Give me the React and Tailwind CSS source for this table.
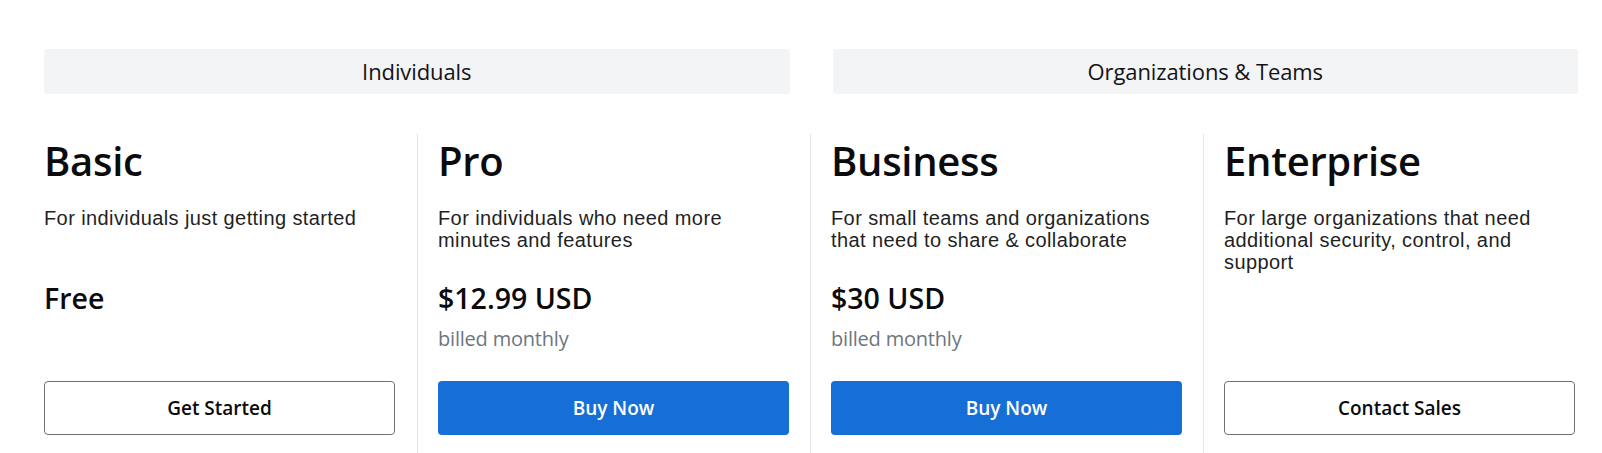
import React from "react";

const plans = [
  {
    name: "Basic",
    desc: ["For individuals just getting started"],
    price: "Free",
    billed: null,
    cta: "Get Started",
    primary: false,
  },
  {
    name: "Pro",
    desc: ["For individuals who need more", "minutes and features"],
    price: "$12.99 USD",
    billed: "billed monthly",
    cta: "Buy Now",
    primary: true,
  },
  {
    name: "Business",
    desc: ["For small teams and organizations", "that need to share & collaborate"],
    price: "$30 USD",
    billed: "billed monthly",
    cta: "Buy Now",
    primary: true,
  },
  {
    name: "Enterprise",
    desc: ["For large organizations that need", "additional security, control, and", "support"],
    price: null,
    billed: null,
    cta: "Contact Sales",
    primary: false,
  },
];

function Column({ plan, first }) {
  return (
    <div
      className={
        first
          ? "w-[373px] pr-[22px] pb-[30px]"
          : "w-[393px] border-l border-[#e6e7e9] pl-[20px] pr-[21px] pb-[30px]"
      }
    >
      <h2 className="text-[40px] leading-[48px] font-semibold text-[#0b0b0e] mt-[3px] tracking-[-0.3px]">
        {plan.name}
      </h2>
      <div
        className="mt-[22px] h-[70px] text-[20px] leading-[22px] text-[#1f1f24] tracking-[0.4px]"
        style={{ fontFamily: "'Liberation Sans', Arial, sans-serif" }}
      >
        {plan.desc.map((l) => (
          <div key={l}>{l}</div>
        ))}
      </div>
      <div className="h-[104px] pt-[4px]">
        {plan.price && (
          <div className="text-[28.5px] leading-[34px] font-semibold text-[#0b0b0e]">{plan.price}</div>
        )}
        {plan.billed && (
          <div className="mt-[13px] text-[20px] leading-[22px] text-[#6e7680] tracking-[-0.2px]">{plan.billed}</div>
        )}
      </div>
      <button
        className={
          plan.primary
            ? "w-[351px] h-[54px] rounded-[4px] bg-[#166ed7] text-white text-[19px] font-semibold flex items-center justify-center"
            : "w-[351px] h-[54px] rounded-[4px] border border-[#6e7278] bg-white text-[#0b0b0e] text-[19px] font-semibold flex items-center justify-center"
        }
      >
        {plan.cta}
      </button>
    </div>
  );
}

export default function App() {
  return (
    <div
      className="bg-white w-full h-[453px] overflow-hidden pt-[49px] pl-[44px]"
      style={{ fontFamily: "'Open Sans', 'Noto Sans', sans-serif" }}
    >
      <div className="w-[1534px]">
        <div className="grid grid-cols-2 gap-[43px]">
          <div className="h-[45px] bg-[#f3f4f5] rounded-[3px] flex items-center justify-center text-[22px] font-medium text-[#131318] tracking-[-0.1px]">
            Individuals
          </div>
          <div className="h-[45px] bg-[#f3f4f5] rounded-[3px] flex items-center justify-center text-[22px] font-medium text-[#131318] tracking-[-0.1px]">
            Organizations &amp; Teams
          </div>
        </div>
        <div className="flex mt-[40px]">
          {plans.map((p, i) => (
            <Column key={p.name} plan={p} first={i === 0} />
          ))}
        </div>
      </div>
    </div>
  );
}
